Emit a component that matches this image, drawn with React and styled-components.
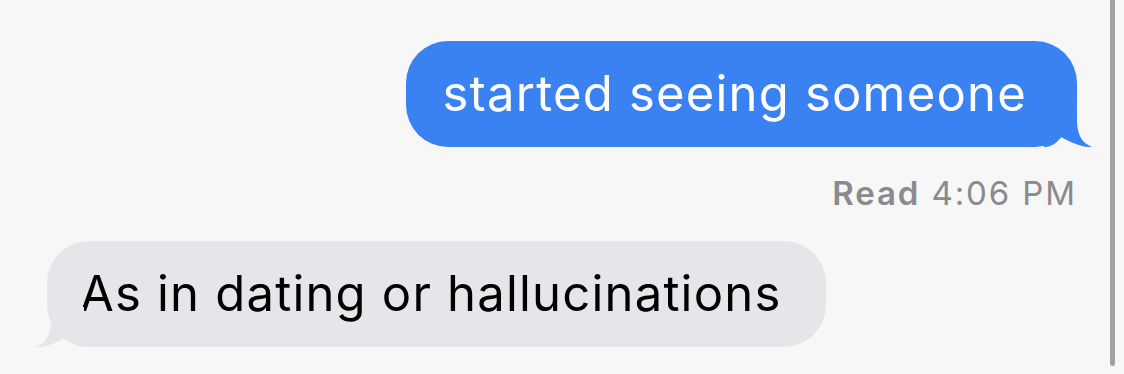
import React from 'react';
import styled, { createGlobalStyle } from 'styled-components';

const GlobalStyle = createGlobalStyle`
  html, body {
    margin: 0;
    padding: 0;
    background: #f7f7f7;
  }
  body {
    font-family: Inter, "Liberation Sans", sans-serif;
    -webkit-font-smoothing: antialiased;
  }
`;

const Screen = styled.div`
  display: flex;
  width: 1124px;
  height: 374px;
  overflow: hidden;
  background: #f7f7f7;
`;

const Thread = styled.div`
  flex: 1;
  display: flex;
  flex-direction: column;
  padding: 41px 23px 0 47px;
`;

const Row = styled.div`
  display: flex;
  justify-content: ${(p) => (p.$out ? 'flex-end' : 'flex-start')};
`;

const Bubble = styled.div`
  position: relative;
  height: 106px;
  line-height: 106px;
  padding: 0 ${(p) => (p.$out ? '50px' : '45px')} 0 ${(p) => (p.$out ? '37px' : '33px')};
  border-radius: 42px;
  font-size: 49px;
  letter-spacing: 1.2px;
  white-space: nowrap;
  background: ${(p) => (p.$out ? '#3a82f1' : '#e6e6ea')};
  color: ${(p) => (p.$out ? '#ffffff' : '#000000')};
`;

const Tail = styled.svg`
  position: absolute;
  bottom: 0;
  width: 48px;
  height: 40px;
  ${(p) => (p.$out ? 'right: -15px;' : 'left: -11px; transform: scaleX(-1);')}
`;

const Receipt = styled.div`
  margin-top: 26px;
  height: 40px;
  line-height: 40px;
  text-align: right;
  font-size: 33px;
  letter-spacing: 1.9px;
  color: #8a8a8f;
`;

const ReadLabel = styled.span`
  font-weight: 600;
`;

const Incoming = styled(Row)`
  margin-top: 28px;
`;

const ScrollTrack = styled.div`
  width: 24px;
  display: flex;
  justify-content: flex-start;
  padding-left: 10px;
  box-sizing: border-box;
`;

const Thumb = styled.div`
  width: 5px;
  height: 366px;
  border-radius: 0 0 3px 3px;
  background: #a2a2a2;
`;

const BubbleTail = ({ out, color }) => (
  <Tail $out={out} viewBox="0 0 48 40" preserveAspectRatio="none">
    <path
      d="M0 0 H33 V13 C33 28 38 36 48 40 C38 40.5 28 36 17 30 C14 34 10 39 2 40 L0 40 Z"
      fill={color}
    />
  </Tail>
);

const Message = ({ out, children }) => (
  <Bubble $out={out}>
    {children}
    <BubbleTail out={out} color={out ? '#3a82f1' : '#e6e6ea'} />
  </Bubble>
);

export default function App() {
  return (
    <>
      <GlobalStyle />
      <Screen>
        <Thread>
          <Row $out>
            <Message out>started seeing someone</Message>
          </Row>
          <Receipt>
            <ReadLabel>Read</ReadLabel> 4:06 PM
          </Receipt>
          <Incoming>
            <Message>As in dating or hallucinations</Message>
          </Incoming>
        </Thread>
        <ScrollTrack>
          <Thumb />
        </ScrollTrack>
      </Screen>
    </>
  );
}
